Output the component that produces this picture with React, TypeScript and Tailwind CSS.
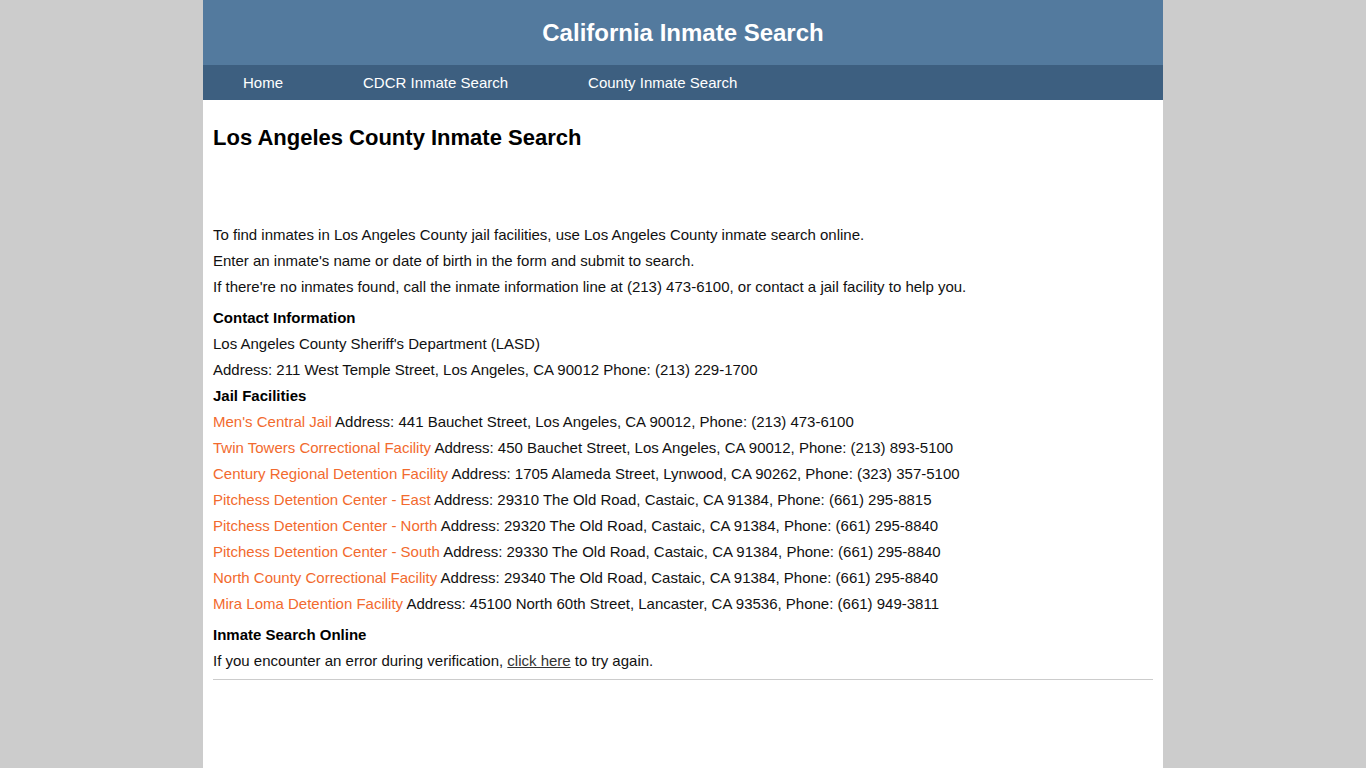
const facilities = [
  {
    name: "Men's Central Jail",
    info: 'Address: 441 Bauchet Street, Los Angeles, CA 90012, Phone: (213) 473-6100',
  },
  {
    name: 'Twin Towers Correctional Facility',
    info: 'Address: 450 Bauchet Street, Los Angeles, CA 90012, Phone: (213) 893-5100',
  },
  {
    name: 'Century Regional Detention Facility',
    info: 'Address: 1705 Alameda Street, Lynwood, CA 90262, Phone: (323) 357-5100',
  },
  {
    name: 'Pitchess Detention Center - East',
    info: 'Address: 29310 The Old Road, Castaic, CA 91384, Phone: (661) 295-8815',
  },
  {
    name: 'Pitchess Detention Center - North',
    info: 'Address: 29320 The Old Road, Castaic, CA 91384, Phone: (661) 295-8840',
  },
  {
    name: 'Pitchess Detention Center - South',
    info: 'Address: 29330 The Old Road, Castaic, CA 91384, Phone: (661) 295-8840',
  },
  {
    name: 'North County Correctional Facility',
    info: 'Address: 29340 The Old Road, Castaic, CA 91384, Phone: (661) 295-8840',
  },
  {
    name: 'Mira Loma Detention Facility',
    info: 'Address: 45100 North 60th Street, Lancaster, CA 93536, Phone: (661) 949-3811',
  },
];

const navLinks = ['Home', 'CDCR Inmate Search', 'County Inmate Search'];

export default function App() {
  return (
    <div className="min-h-screen bg-[#cccccc] font-['Liberation_Sans',Arial,sans-serif]">
      <div className="w-[960px] mx-auto bg-white min-h-screen">
        <header className="h-[65px] bg-[#537a9e] flex items-center justify-center">
          <h2 className="text-white text-[24px] font-bold">California Inmate Search</h2>
        </header>
        <nav className="h-[35px] bg-[#3d5f80] flex items-center">
          {navLinks.map((link) => (
            <a key={link} href="#" className="px-[40px] text-white text-[15px] leading-[35px]">
              {link}
            </a>
          ))}
        </nav>

        <main className="px-[10px] text-[15px] leading-[26px] text-[#111111]">
          <h1 className="mt-[25px] text-[22px] leading-[26px] font-bold text-black">
            Los Angeles County Inmate Search
          </h1>
          <div className="h-[71px]" />
          <p>To find inmates in Los Angeles County jail facilities, use Los Angeles County inmate search online.</p>
          <p>Enter an inmate's name or date of birth in the form and submit to search.</p>
          <p>
            If there're no inmates found, call the inmate information line at (213) 473-6100, or contact a jail
            facility to help you.
          </p>

          <h3 className="mt-[5px] font-bold text-black">Contact Information</h3>
          <p>Los Angeles County Sheriff's Department (LASD)</p>
          <p>Address: 211 West Temple Street, Los Angeles, CA 90012 Phone: (213) 229-1700</p>

          <h3 className="font-bold text-black">Jail Facilities</h3>
          {facilities.map((f) => (
            <p key={f.name}>
              <a href="#" className="text-[#f26a2e]">
                {f.name}
              </a>{' '}
              {f.info}
            </p>
          ))}

          <h3 className="mt-[5px] font-bold text-black">Inmate Search Online</h3>
          <p>
            If you encounter an error during verification,{' '}
            <a href="#" className="underline text-[#333333]">
              click here
            </a>{' '}
            to try again.
          </p>
          <hr className="mt-[5px] border-0 border-t border-[#cccccc]" />
        </main>
      </div>
    </div>
  );
}
